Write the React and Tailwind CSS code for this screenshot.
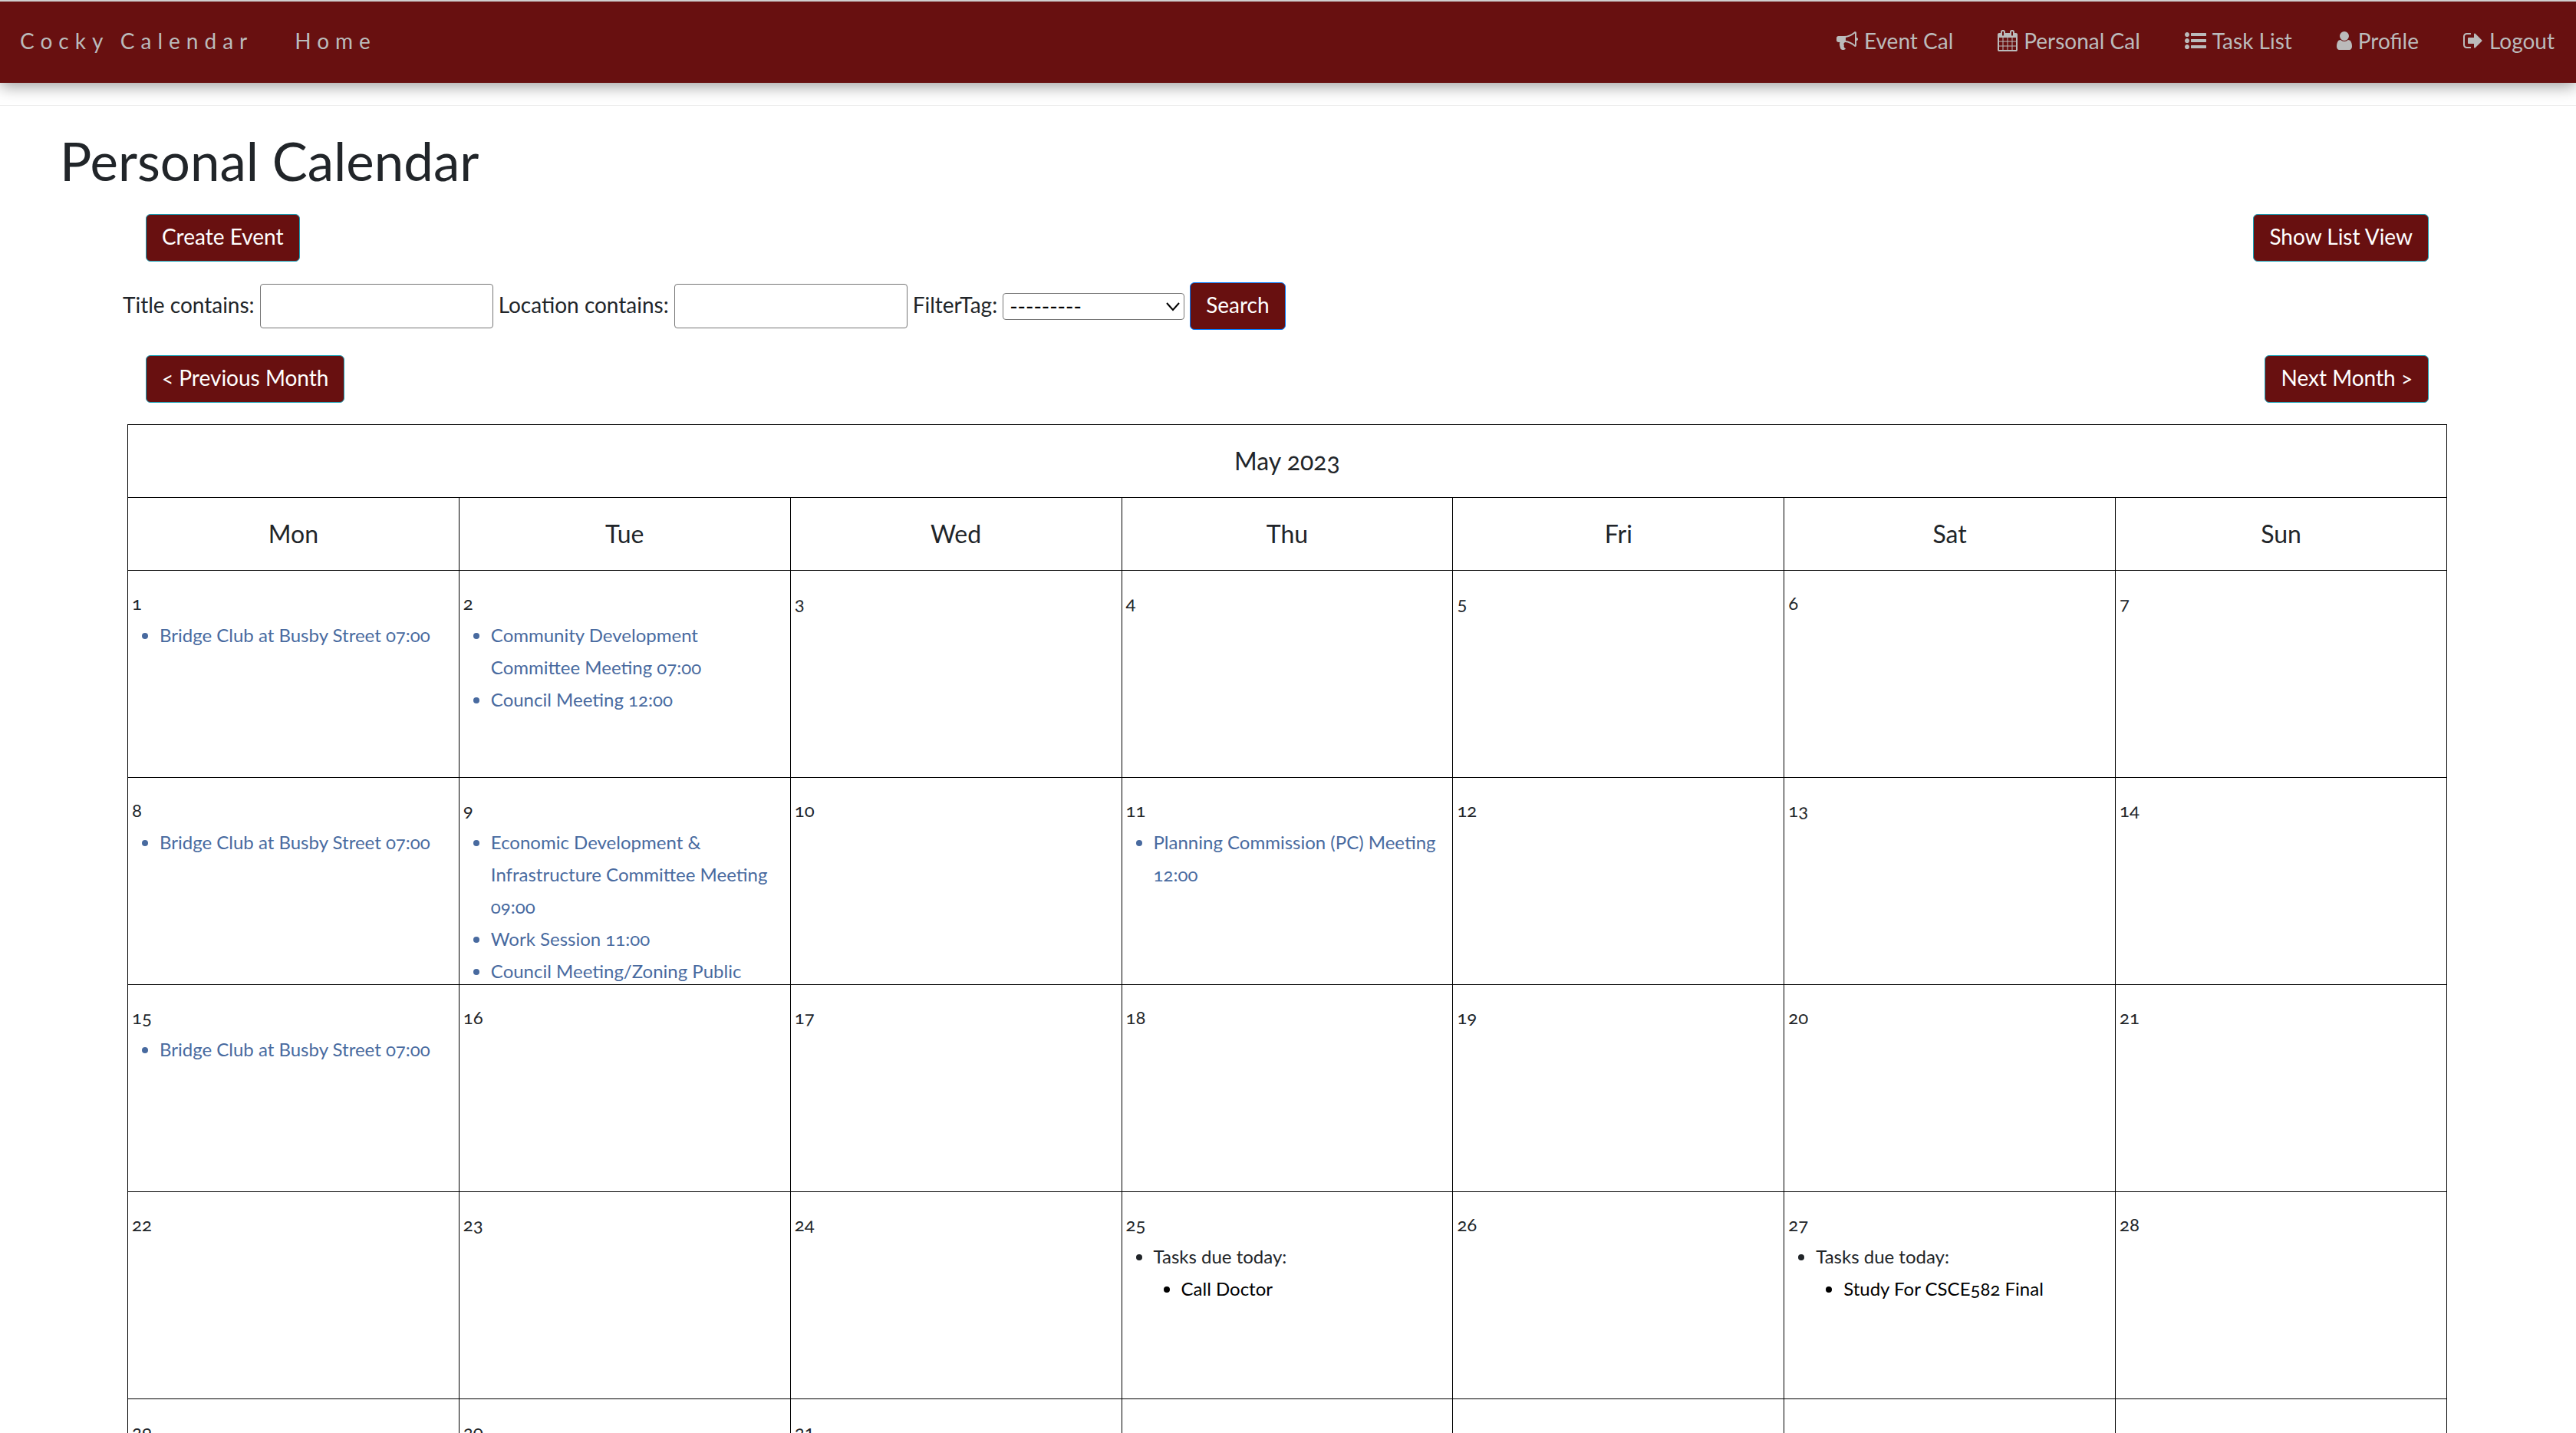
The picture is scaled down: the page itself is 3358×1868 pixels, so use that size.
import React from "react";

const ICONS = {
  bullhorn:
    "M1664 640q53 0 90.5 37.5t37.5 90.5-37.5 90.5-90.5 37.5v384q0 52-38 90t-90 38q-417-347-812-380-58 19-91 66t-31 100.5 40 92.5q-20 33-23 65.5t6 58 33.5 55 48 50 61.5 50.5q-29 58-111.5 83t-168.5 11.5-132-55.5q-7-23-29.5-87.5t-32-94.5-23-89-15-101 3.5-98.5 22-110.5h-122q-66 0-113-47t-47-113v-192q0-66 47-113t113-47h480q435 0 896-384 52 0 90 38t38 90v384zm-128 604v-954q-394 302-768 343v270q377 42 768 341z",
  calendar:
    "M192 1664h288v-288h-288v288zm352 0h320v-288h-320v288zm-352-352h288v-320h-288v320zm352 0h320v-320h-320v320zm-352-384h288v-288h-288v288zm736 736h320v-288h-320v288zm-384-736h320v-288h-320v288zm768 736h288v-288h-288v288zm-384-352h320v-320h-320v320zm-352-864v-288q0-13-9.5-22.5t-22.5-9.5h-64q-13 0-22.5 9.5t-9.5 22.5v288q0 13 9.5 22.5t22.5 9.5h64q13 0 22.5-9.5t9.5-22.5zm736 864h288v-320h-288v320zm-384-384h320v-288h-320v288zm384 0h288v-288h-288v288zm32-480v-288q0-13-9.5-22.5t-22.5-9.5h-64q-13 0-22.5 9.5t-9.5 22.5v288q0 13 9.5 22.5t22.5 9.5h64q13 0 22.5-9.5t9.5-22.5zm384-64v1280q0 52-38 90t-90 38h-1408q-52 0-90-38t-38-90v-1280q0-52 38-90t90-38h128v-96q0-66 47-113t113-47h64q66 0 113 47t47 113v96h384v-96q0-66 47-113t113-47h64q66 0 113 47t47 113v96h128q52 0 90 38t38 90z",
  list:
    "M384 1408q0 80-56 136t-136 56-136-56-56-136 56-136 136-56 136 56 56 136zm0-512q0 80-56 136t-136 56-136-56-56-136 56-136 136-56 136 56 56 136zm1408 416v192q0 13-9.5 22.5t-22.5 9.5h-1216q-13 0-22.5-9.5t-9.5-22.5v-192q0-13 9.5-22.5t22.5-9.5h1216q13 0 22.5 9.5t9.5 22.5zm-1408-928q0 80-56 136t-136 56-136-56-56-136 56-136 136-56 136 56 56 136zm1408 416v192q0 13-9.5 22.5t-22.5 9.5h-1216q-13 0-22.5-9.5t-9.5-22.5v-192q0-13 9.5-22.5t22.5-9.5h1216q13 0 22.5 9.5t9.5 22.5zm0-512v192q0 13-9.5 22.5t-22.5 9.5h-1216q-13 0-22.5-9.5t-9.5-22.5v-192q0-13 9.5-22.5t22.5-9.5h1216q13 0 22.5 9.5t9.5 22.5z",
  user:
    "M1536 1399q0 109-62.5 187t-150.5 78h-854q-88 0-150.5-78t-62.5-187q0-85 8.5-160.5t31.5-152 58.5-131 94-89 134.5-34.5q131 128 313 128t313-128q76 0 134.5 34.5t94 89 58.5 131 31.5 152 8.5 160.5zm-256-887q0 159-112.5 271.5t-271.5 112.5-271.5-112.5-112.5-271.5 112.5-271.5 271.5-112.5 271.5 112.5 112.5 271.5z",
  signOut:
    "M704 1440q0 4 1 20t.5 26.5-3 23.5-10 19.5-20.5 6.5h-320q-119 0-203.5-84.5t-84.5-203.5v-704q0-119 84.5-203.5t203.5-84.5h320q13 0 22.5 9.5t9.5 22.5q0 4 1 20t.5 26.5-3 23.5-10 19.5-20.5 6.5h-320q-66 0-113 47t-47 113v704q0 66 47 113t113 47h312l11.5 1 11.5 3 8 5.5 7 9 2 13.5zm928-544q0 26-19 45l-544 544q-19 19-45 19t-45-19-19-45v-288h-448q-26 0-45-19t-19-45v-384q0-26 19-45t45-19h448v-288q0-26 19-45t45-19 45 19l544 544q19 19 19 45z",
};

const NAV = [
  { icon: "bullhorn", box: "0 0 1792 1792", size: "w-7", label: "Event Cal" },
  { icon: "calendar", box: "64 0 1664 1792", size: "w-[26px]", label: "Personal Cal" },
  { icon: "list", box: "0 0 1792 1792", size: "w-7", label: "Task List" },
  { icon: "user", box: "256 0 1280 1792", size: "w-5", label: "Profile" },
  { icon: "signOut", box: "64 0 1664 1792", size: "w-[26px]", label: "Logout" },
];

const DAYS = ["Mon", "Tue", "Wed", "Thu", "Fri", "Sat", "Sun"];
const BRIDGE = ["Bridge Club at Busby Street 07:00"];
const EVENTS = {
  1: BRIDGE,
  2: ["Community Development Committee Meeting 07:00", "Council Meeting 12:00"],
  8: BRIDGE,
  9: [
    "Economic Development & Infrastructure Committee Meeting 09:00",
    "Work Session 11:00",
    "Council Meeting/Zoning Public",
  ],
  11: ["Planning Commission (PC) Meeting 12:00"],
  15: BRIDGE,
};
const TASKS = { 25: ["Call Doctor"], 27: ["Study For CSCE582 Final"] };
const WEEKS = [0, 1, 2, 3, 4].map((w) => [1, 2, 3, 4, 5, 6, 7].map((d) => w * 7 + d));

function Button({ children, className = "border-[#17a2b8]", type = "button" }) {
  return (
    <button type={type} className={`h-[62px] rounded-md border bg-[#681010] px-5 pb-1 text-[28px] leading-8 text-white ${className}`}>
      {children}
    </button>
  );
}

function Day({ day }) {
  if (day > 31) return <td className="border border-black" />;
  return (
    <td className="border border-black p-0 align-top">
      <div className="h-[266px] overflow-hidden px-[5px] pt-[21px] text-[24px] leading-[42px]">
        <span className="block">{day}</span>
        {EVENTS[day] && (
          <ul className="list-disc pl-9 text-[#486a9f]">
            {EVENTS[day].map((e) => (
              <li key={e}><a href="#event">{e}</a></li>
            ))}
          </ul>
        )}
        {TASKS[day] && (
          <ul className="list-disc pl-9">
            <li>
              Tasks due today:
              <ul className="list-disc pl-9 text-black">
                {TASKS[day].map((t) => (
                  <li key={t}><a href="#task">{t}</a></li>
                ))}
              </ul>
            </li>
          </ul>
        )}
      </div>
    </td>
  );
}

export default function App() {
  return (
    <div className="h-screen overflow-hidden bg-white font-['Lato',sans-serif] text-[#212529] oldstyle-nums">
      <nav className="flex h-[108px] items-center justify-between border-t-2 border-[#cfcfcf] bg-[#681010] pr-7 pb-1 pl-[26px] text-[28px] text-[#bbb] shadow-[0_4px_20px_rgba(0,0,0,0.4)]">
        <div className="flex gap-[54px] tracking-[8px]">
          <a href="#top">Cocky Calendar</a>
          <a href="#home">Home</a>
        </div>
        <div className="flex gap-[58px]">
          {NAV.map((n) => (
            <a key={n.label} href="#nav" className="flex items-center gap-2">
              <svg viewBox={n.box} className={`h-7 fill-current ${n.size}`} aria-hidden="true">
                <path d={ICONS[n.icon]} />
              </svg>
              {n.label}
            </a>
          ))}
        </div>
      </nav>
      <hr className="mt-[29px] border-[#eee]" />
      <main>
        <h1 className="mt-[30px] pl-[78px] text-[69px] leading-[84px]">Personal Calendar</h1>
        <div className="mt-[27px] flex justify-between pr-48 pl-[190px]">
          <Button>Create Event</Button>
          <Button>Show List View</Button>
        </div>
        <form className="mt-[27px] flex items-center gap-[7px] pl-40 text-[28px]">
          <label htmlFor="title" className="pb-1">Title contains:</label>
          <input id="title" type="text" className="h-[58px] w-[304px] rounded-sm border border-[#767676] px-2" />
          <label htmlFor="location" className="pb-1">Location contains:</label>
          <input id="location" type="text" className="h-[58px] w-[304px] rounded-sm border border-[#767676] px-2" />
          <label htmlFor="tag" className="pb-1">FilterTag:</label>
          <div className="relative flex">
            <select id="tag" className="h-[35px] w-[237px] appearance-none rounded-sm border border-[#767676] bg-white pl-2 text-[28px] leading-7 text-black">
              <option>---------</option>
            </select>
            <svg viewBox="0 0 18 12" className="pointer-events-none absolute top-3 right-1.5 h-3 w-[18px] fill-none stroke-black stroke-2" aria-hidden="true">
              <path d="M1 1L9 10L17 1" />
            </svg>
          </div>
          <Button type="submit" className="border-[#007bff]">Search</Button>
        </form>
        <div className="mt-[33px] flex justify-between pr-48 pl-[190px]">
          <Button>&lt; Previous Month</Button>
          <Button>Next Month &gt;</Button>
        </div>
        <div className="mt-7 pr-[168px] pl-[166px]">
          <table className="w-full table-fixed border-collapse border border-black">
            <thead className="text-[32px]">
              <tr className="h-[95px]">
                <th colSpan={7} className="border border-black font-normal">May 2023</th>
              </tr>
              <tr className="h-[95px]">
                {DAYS.map((d) => (
                  <th key={d} className="border border-black font-normal">{d}</th>
                ))}
              </tr>
            </thead>
            <tbody>
              {WEEKS.map((w) => (
                <tr key={w[0]} className="h-[270px]">
                  {w.map((d) => <Day key={d} day={d} />)}
                </tr>
              ))}
            </tbody>
          </table>
        </div>
      </main>
    </div>
  );
}
